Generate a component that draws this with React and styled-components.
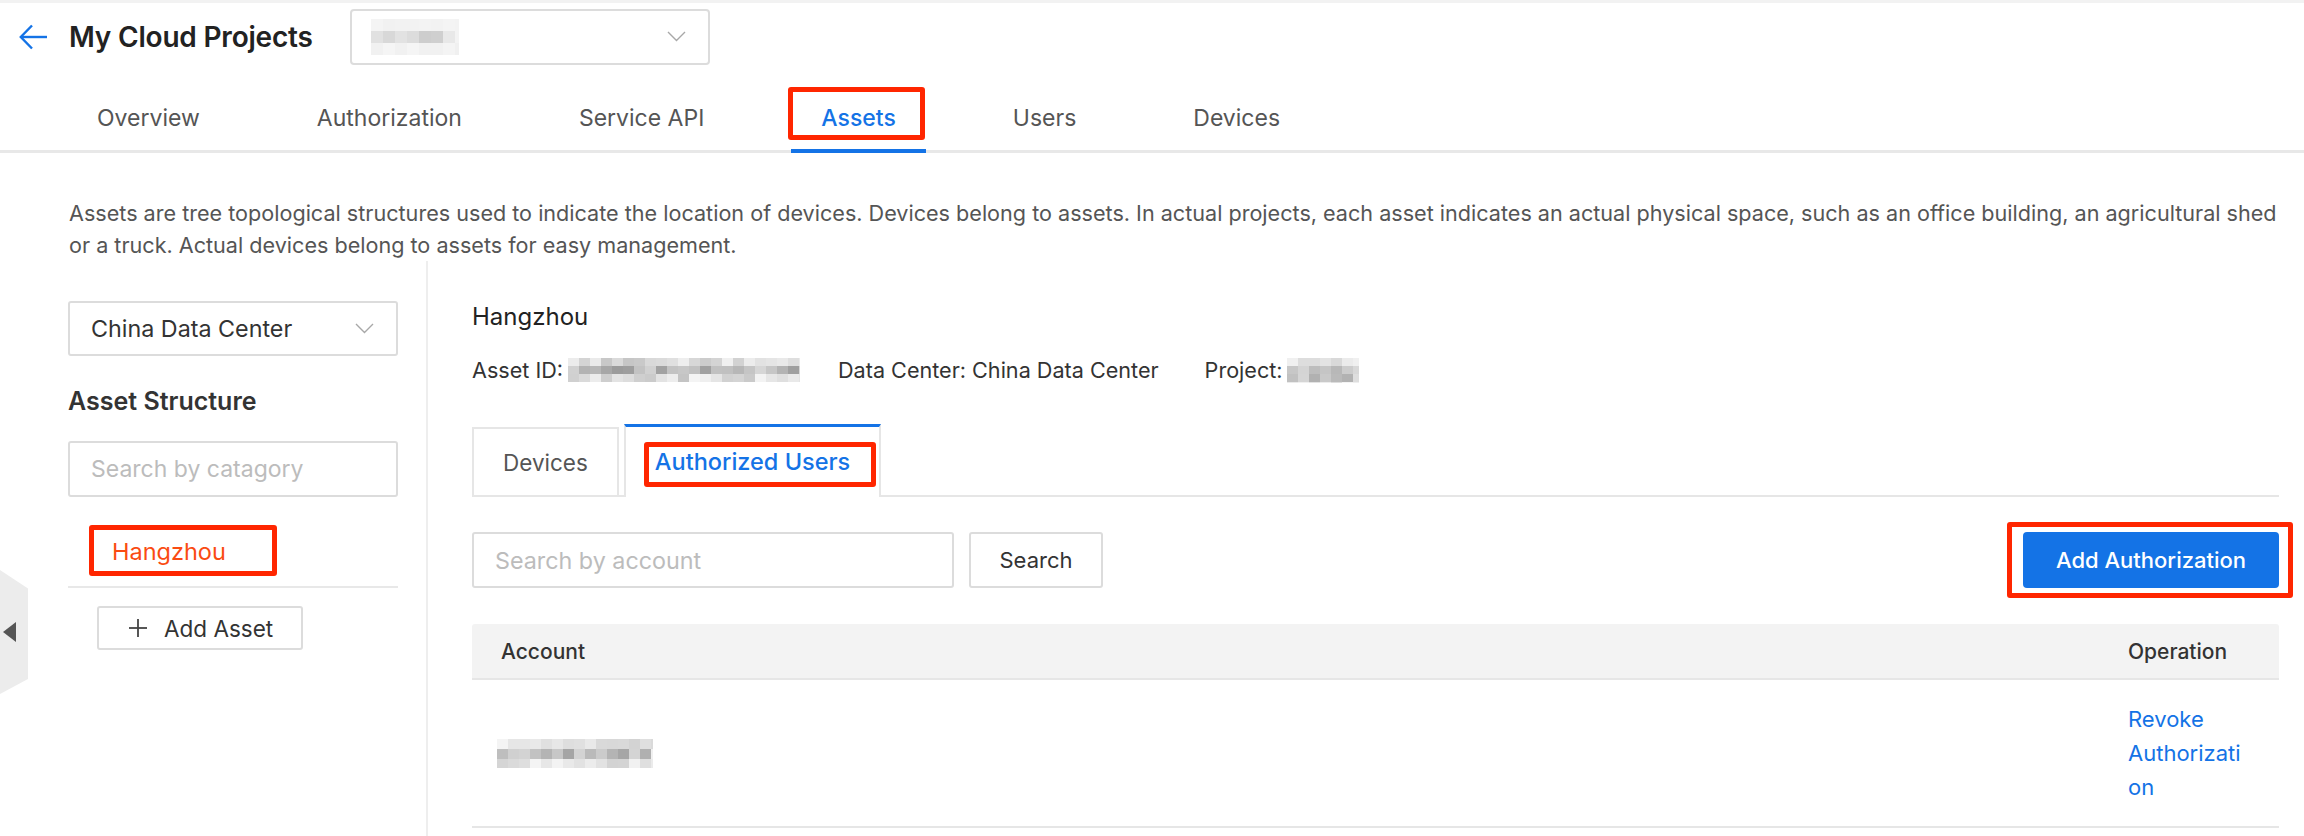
import React from "react";
import styled, { createGlobalStyle } from "styled-components";

const GlobalStyle = createGlobalStyle`
  html, body {
    margin: 0;
    padding: 0;
    background: #fff;
  }
  body {
    font-family: Inter, "Liberation Sans", Arial, sans-serif;
    color: #333;
    overflow: hidden;
  }
  * {
    box-sizing: border-box;
  }
`;

// pixelated placeholder for redacted values
const shade = (seed, i, lo, hi) => {
  const x = Math.sin(seed * 97.13 + i * 12.9898) * 43758.5453;
  const f = x - Math.floor(x);
  const v = Math.round(lo + (hi - lo) * f);
  return `rgb(${v},${v},${v})`;
};

const Mosaic = ({ w, h, cw = 11, ch = 8, seed = 1, lo = 160, hi = 225 }) => {
  const cols = Math.ceil(w / cw);
  const rows = Math.ceil(h / ch);
  const rects = [];
  for (let r = 0; r < rows; r++) {
    const edge = r === 0 || r === rows - 1;
    for (let c = 0; c < cols; c++) {
      const endCol = c === cols - 1;
      const l = edge || endCol ? Math.min(lo + 45, 240) : lo;
      const hh = edge || endCol ? 245 : hi;
      rects.push(
        <rect
          key={`${r}-${c}`}
          x={c * cw}
          y={r * ch}
          width={cw}
          height={ch}
          fill={shade(seed, r * cols + c, l, hh)}
        />
      );
    }
  }
  return (
    <MosaicSvg width={w} height={h} viewBox={`0 0 ${w} ${h}`}>
      {rects}
    </MosaicSvg>
  );
};

const Chevron = () => (
  <svg width="19" height="11" viewBox="0 0 19 11" fill="none">
    <polyline points="1,1 9.5,9.5 18,1" stroke="#a8a8a8" strokeWidth="1.4" />
  </svg>
);

const BackArrow = () => (
  <svg width="28" height="26" viewBox="0 0 28 26" fill="none">
    <polyline points="13,1.5 1.8,13 13,24.5" stroke="currentColor" strokeWidth="2.4" />
    <line x1="2" y1="13" x2="28" y2="13" stroke="currentColor" strokeWidth="2.4" />
  </svg>
);

const PlusIcon = () => (
  <svg width="18" height="18" viewBox="0 0 18 18" fill="none">
    <line x1="9" y1="0" x2="9" y2="18" stroke="#444" strokeWidth="1.8" />
    <line x1="0" y1="9" x2="18" y2="9" stroke="#444" strokeWidth="1.8" />
  </svg>
);

const tabs = ["Overview", "Authorization", "Service API", "Assets", "Users", "Devices"];

const App = () => {
  return (
    <Page>
      <GlobalStyle />
      <Header>
        <BackButton aria-label="back">
          <BackArrow />
        </BackButton>
        <Title>My Cloud Projects</Title>
        <ProjectSelect>
          <Mosaic w={88} h={36} cw={12} ch={12} seed={3} lo={200} hi={232} />
          <Chevron />
        </ProjectSelect>
      </Header>

      <TabNav>
        {tabs.map((t) => (
          <TabItem key={t} $active={t === "Assets"}>
            {t === "Assets" ? (
              <Marked>
                {t}
                <RedBox $t={-17} $r={-29} $b={-8} $l={-33} />
              </Marked>
            ) : (
              t
            )}
          </TabItem>
        ))}
      </TabNav>

      <Description>
        Assets are tree topological structures used to indicate the location of devices. Devices
        belong to assets. In actual projects, each asset indicates an actual physical space, such
        as an office building, an agricultural shed
        <br />
        or a truck. Actual devices belong to assets for easy management.
      </Description>

      <Body>
        <CollapseHandle>
          <HandleArrow />
        </CollapseHandle>

        <Sidebar>
          <SelectBox>
            <span>China Data Center</span>
            <Chevron />
          </SelectBox>
          <SideHeading>Asset Structure</SideHeading>
          <TextInput placeholder="Search by catagory" />
          <TreeList>
            <TreeNode>
              <Marked>
                Hangzhou
                <RedBox $t={-13} $r={-51} $b={-10} $l={-23} />
              </Marked>
            </TreeNode>
          </TreeList>
          <AddAssetButton>
            <PlusIcon />
            Add Asset
          </AddAssetButton>
        </Sidebar>

        <Main>
          <AssetName>Hangzhou</AssetName>
          <InfoRow>
            <InfoItem>
              Asset ID:
              <Mosaic w={232} h={24} cw={11} ch={8} seed={7} lo={150} hi={215} />
            </InfoItem>
            <InfoItem>Data Center: China Data Center</InfoItem>
            <InfoItem $gap={4} $lead={8}>
              Project:
              <Mosaic w={72} h={25} cw={11} ch={8} seed={11} lo={170} hi={215} />
            </InfoItem>
          </InfoRow>

          <SubTabs>
            <SubTab>Devices</SubTab>
            <SubTab $active>
              <Marked>
                Authorized Users
                <RedBox $t={-6} $r={-26} $b={-11} $l={-11} />
              </Marked>
            </SubTab>
          </SubTabs>

          <Toolbar>
            <SearchInput placeholder="Search by account" />
            <OutlineButton>Search</OutlineButton>
            <PrimaryWrap>
              <PrimaryButton>Add Authorization</PrimaryButton>
              <RedBox $t={-10} $r={-14} $b={-10} $l={-16} />
            </PrimaryWrap>
          </Toolbar>

          <Table>
            <HeadRow>
              <HeadCell>Account</HeadCell>
              <HeadCell>Operation</HeadCell>
            </HeadRow>
            <BodyRow>
              <Cell>
                <Mosaic w={156} h={29} cw={11} ch={10} seed={5} lo={165} hi={215} />
              </Cell>
              <Cell>
                <LinkText href="#">Revoke Authorization</LinkText>
              </Cell>
            </BodyRow>
          </Table>
        </Main>
      </Body>
    </Page>
  );
};

const Page = styled.div`
  width: 100vw;
  min-height: 100vh;
  display: flex;
  flex-direction: column;
  border-top: 3px solid #f2f2f2;
  overflow: hidden;
`;

const MosaicSvg = styled.svg`
  display: block;
  flex-shrink: 0;
`;

const Header = styled.header`
  height: 67px;
  display: flex;
  align-items: center;
  padding-left: 19px;
`;

const BackButton = styled.button`
  border: 0;
  background: none;
  padding: 0;
  margin-right: 22px;
  color: #1473e6;
  display: flex;
  cursor: pointer;
`;

const Title = styled.h1`
  margin: 0 37px 0 0;
  font-size: 28px;
  font-weight: 600;
  color: #222;
  letter-spacing: -0.2px;
`;

const ProjectSelect = styled.div`
  width: 360px;
  height: 56px;
  border: 2px solid #dcdcdc;
  border-radius: 4px;
  display: flex;
  align-items: center;
  justify-content: space-between;
  padding: 0 22px 0 19px;
`;

const TabNav = styled.nav`
  height: 83px;
  display: flex;
  align-items: flex-end;
  gap: 57px;
  padding-left: 67px;
  border-bottom: 3px solid #e8e8e8;
`;

const TabItem = styled.div`
  position: relative;
  height: 64px;
  line-height: 64px;
  padding: 0 30px;
  font-size: 23px;
  color: ${(p) => (p.$active ? "#1473e6" : "#555")};
  font-weight: ${(p) => (p.$active ? 500 : 400)};
  cursor: pointer;

  &::after {
    content: "";
    display: ${(p) => (p.$active ? "block" : "none")};
    position: absolute;
    left: 0;
    right: 0;
    bottom: -3px;
    height: 4px;
    background: #1473e6;
  }
`;

const Marked = styled.span`
  position: relative;
  display: inline-block;
  line-height: 28px;
`;

const RedBox = styled.span`
  position: absolute;
  top: ${(p) => p.$t}px;
  right: ${(p) => p.$r}px;
  bottom: ${(p) => p.$b}px;
  left: ${(p) => p.$l}px;
  border: 5px solid #ff2600;
  border-radius: 3px;
  pointer-events: none;
`;

const Description = styled.p`
  margin: 44px 0 0;
  padding-left: 69px;
  font-size: 21.6px;
  line-height: 32px;
  color: #555;
  white-space: nowrap;
`;

const Body = styled.div`
  position: relative;
  flex: 1;
  display: flex;
`;

const CollapseHandle = styled.div`
  position: absolute;
  left: 0;
  top: 309px;
  width: 28px;
  height: 124px;
  background: #ececec;
  clip-path: polygon(0 0, 100% 15%, 100% 88%, 0 100%);
  display: flex;
  align-items: center;
`;

const HandleArrow = styled.span`
  width: 0;
  height: 0;
  margin-left: 3px;
  border-top: 10px solid transparent;
  border-bottom: 10px solid transparent;
  border-right: 13px solid #555;
`;

const Sidebar = styled.aside`
  width: 428px;
  flex-shrink: 0;
  padding: 40px 28px 0 68px;
  border-right: 2px solid #eeeeee;
`;

const SelectBox = styled.div`
  height: 55px;
  border: 2px solid #dcdcdc;
  border-radius: 3px;
  display: flex;
  align-items: center;
  justify-content: space-between;
  padding: 0 22px 0 21px;
  font-size: 23.3px;
  color: #333;
`;

const SideHeading = styled.h3`
  margin: 30px 0 25px;
  font-size: 25px;
  line-height: 30px;
  font-weight: 600;
  color: #333;
`;

const TextInput = styled.input`
  width: 100%;
  height: 56px;
  border: 2px solid #dcdcdc;
  border-radius: 3px;
  padding: 0 21px;
  font-family: inherit;
  font-size: 23px;
  color: #333;
  outline: none;

  &::placeholder {
    color: #bcbcbc;
  }
`;

const TreeList = styled.div`
  padding: 40px 0 20px;
  border-bottom: 2px solid #e8e8e8;
`;

const TreeNode = styled.div`
  padding-left: 44px;
  font-size: 23.5px;
  color: #fa4b12;
`;

const AddAssetButton = styled.button`
  margin: 18px 0 0 29px;
  width: 206px;
  height: 44px;
  display: flex;
  align-items: center;
  gap: 17px;
  padding: 0 0 0 30px;
  border: 2px solid #dcdcdc;
  border-radius: 3px;
  background: #fff;
  font-family: inherit;
  font-size: 22.5px;
  color: #333;
  cursor: pointer;
`;

const Main = styled.main`
  flex: 1;
  min-width: 0;
  padding: 42px 25px 0 44px;
`;

const AssetName = styled.h2`
  margin: 0;
  font-size: 24px;
  line-height: 28px;
  font-weight: 400;
  color: #222;
`;

const InfoRow = styled.div`
  margin-top: 25px;
  display: flex;
  align-items: center;
  gap: 38px;
  font-size: 21.6px;
  line-height: 28px;
  color: #333;
`;

const InfoItem = styled.div`
  display: flex;
  align-items: center;
  gap: ${(p) => p.$gap ?? 5}px;
  margin-left: ${(p) => p.$lead ?? 0}px;
`;

const SubTabs = styled.div`
  margin-top: 40px;
  display: flex;
  align-items: flex-end;
  gap: 5px;
  border-bottom: 2px solid #e6e6e6;
`;

const SubTab = styled.div`
  height: ${(p) => (p.$active ? 73 : 68)}px;
  margin-bottom: ${(p) => (p.$active ? -2 : 0)}px;
  padding: 0 29px;
  display: flex;
  align-items: center;
  background: #fff;
  border: 2px solid #e6e6e6;
  border-bottom: none;
  border-top: ${(p) => (p.$active ? "3px solid #1473e6" : "2px solid #e6e6e6")};
  font-size: ${(p) => (p.$active ? 23.5 : 22.5)}px;
  font-weight: ${(p) => (p.$active ? 500 : 400)};
  color: ${(p) => (p.$active ? "#1473e6" : "#555")};
  cursor: pointer;
`;

const Toolbar = styled.div`
  margin-top: 35px;
  display: flex;
  align-items: center;
  gap: 15px;
`;

const SearchInput = styled(TextInput)`
  width: 482px;
  font-size: 23.3px;
`;

const OutlineButton = styled.button`
  width: 134px;
  height: 56px;
  border: 2px solid #dcdcdc;
  border-radius: 3px;
  background: #fff;
  font-family: inherit;
  font-size: 22px;
  color: #333;
  cursor: pointer;
`;

const PrimaryWrap = styled.div`
  position: relative;
  margin-left: auto;
`;

const PrimaryButton = styled.button`
  display: block;
  width: 256px;
  height: 56px;
  border: 0;
  border-radius: 4px;
  background: #1473e6;
  font-family: inherit;
  font-size: 22px;
  font-weight: 500;
  color: #fff;
  cursor: pointer;
`;

const Table = styled.div`
  margin-top: 36px;
`;

const HeadRow = styled.div`
  display: grid;
  grid-template-columns: 1fr 180px;
  height: 56px;
  background: #f3f3f3;
  border-bottom: 2px solid #e6e6e6;
  border-radius: 3px 3px 0 0;
`;

const HeadCell = styled.div`
  display: flex;
  align-items: center;
  padding: 0 29px;
  font-size: 21px;
  font-weight: 500;
  color: #333;
`;

const BodyRow = styled.div`
  display: grid;
  grid-template-columns: 1fr 180px;
  border-bottom: 2px solid #e6e6e6;
`;

const Cell = styled.div`
  display: flex;
  align-items: center;
  padding: 22px 29px 22px 25px;

  &:last-child {
    padding-left: 29px;
  }
`;

const LinkText = styled.a`
  display: block;
  width: 122px;
  font-size: 22px;
  line-height: 34px;
  color: #1473e6;
  text-decoration: none;
  overflow-wrap: anywhere;
`;

export default App;
